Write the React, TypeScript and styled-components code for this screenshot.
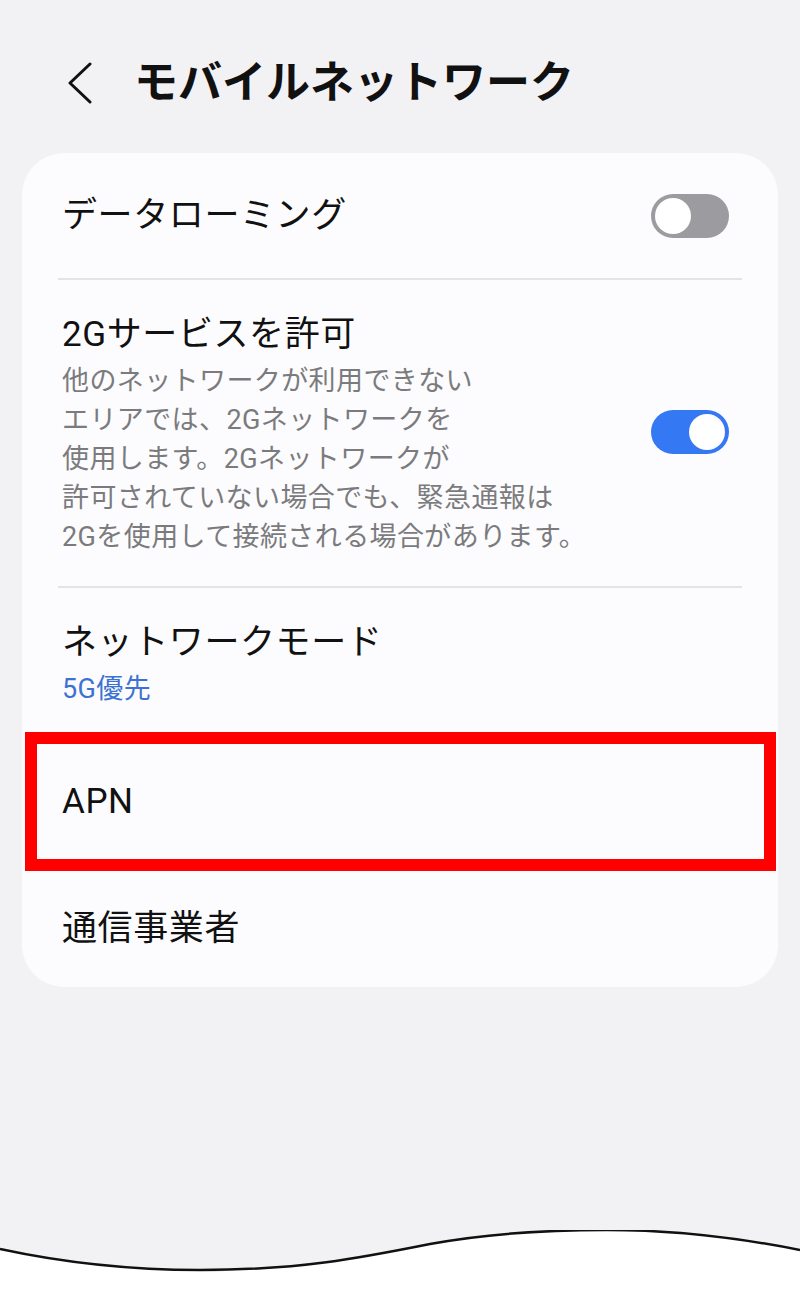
import React from "react";
import styled, { createGlobalStyle } from "styled-components";

const GlobalStyle = createGlobalStyle`
  html, body {
    margin: 0;
    padding: 0;
    background: #f2f2f4;
  }
  body {
    font-family: "Roboto", "Noto Sans CJK JP", sans-serif;
    color: #111;
  }
`;

const Page = styled.div`
  min-height: 1300px;
  display: flex;
  flex-direction: column;
  background: #f2f2f4;
`;

const Header = styled.header`
  display: flex;
  align-items: center;
  height: 86px;
  padding: 40px 0 27px 64px;
  gap: 38px;
`;

const BackButton = styled.button`
  display: flex;
  align-items: center;
  justify-content: center;
  width: 32px;
  height: 44px;
  padding: 0;
  border: none;
  background: none;
  cursor: pointer;
`;

const Title = styled.h1`
  margin: 0;
  font-size: 44px;
  font-weight: 700;
  line-height: 52px;
  letter-spacing: 0;
`;

const Card = styled.section`
  margin: 0 22px;
  background: #fcfcfe;
  border-radius: 42px;
  overflow: hidden;
`;

const Row = styled.div<{ $height?: number; $highlight?: boolean }>`
  display: flex;
  align-items: center;
  justify-content: space-between;
  box-sizing: border-box;
  ${(p) => (p.$height ? `min-height: ${p.$height}px;` : "")}
  padding: ${(p) => (p.$highlight ? "0 37px 0 25px" : "0 49px 0 40px")};
  ${(p) =>
    p.$highlight
      ? `border: 12px solid #ff0000; margin: 0 2px 0 3px;`
      : ""}
`;

const PaddedRow = styled(Row)<{ $top: number; $bottom: number }>`
  padding-top: ${(p) => p.$top}px;
  padding-bottom: ${(p) => p.$bottom}px;
`;

const TextBlock = styled.div`
  display: flex;
  flex-direction: column;
`;

const Label = styled.div`
  font-size: 35px;
  line-height: 46px;
  letter-spacing: 0.6px;
  color: #111;
`;

const Description = styled.div`
  margin-top: 4px;
  font-size: 27px;
  line-height: 39px;
  letter-spacing: 0.4px;
  color: #7b7b7d;
`;

const Value = styled.div`
  margin-top: 3px;
  font-size: 27px;
  line-height: 40px;
  letter-spacing: 0.4px;
  color: #3c73d2;
`;

const Divider = styled.div`
  height: 2px;
  margin: 0 36px;
  background: #e4e4e6;
`;

const Track = styled.div<{ $on?: boolean }>`
  position: relative;
  flex-shrink: 0;
  width: 78px;
  height: 44px;
  border-radius: 22px;
  background: ${(p) => (p.$on ? "#3478f4" : "#9c9ca0")};
  ${(p) => (p.$on ? "margin-bottom: 6px;" : "")}
`;

const Thumb = styled.div<{ $on?: boolean }>`
  position: absolute;
  top: 4px;
  left: ${(p) => (p.$on ? "38px" : "4px")};
  width: 36px;
  height: 36px;
  border-radius: 50%;
  background: #ffffff;
`;

const Wave = styled.svg`
  display: block;
  margin-top: auto;
  width: 800px;
  height: 70px;
`;

const Toggle = ({ on }: { on?: boolean }) => (
  <Track $on={on}>
    <Thumb $on={on} />
  </Track>
);

export default function App() {
  return (
    <Page>
      <GlobalStyle />
      <Header>
        <BackButton aria-label="戻る">
          <svg width="30" height="42" viewBox="0 0 30 42">
            <polyline
              points="25,2 5,21 25,40"
              fill="none"
              stroke="#111"
              strokeWidth="3"
              strokeLinecap="round"
              strokeLinejoin="round"
            />
          </svg>
        </BackButton>
        <Title>モバイルネットワーク</Title>
      </Header>

      <Card>
        <Row $height={125}>
          <Label>データローミング</Label>
          <Toggle />
        </Row>
        <Divider />
        <PaddedRow $top={32} $bottom={29}>
          <TextBlock>
            <Label>2Gサービスを許可</Label>
            <Description>
              他のネットワークが利用できない
              <br />
              エリアでは、2Gネットワークを
              <br />
              使用します。2Gネットワークが
              <br />
              許可されていない場合でも、緊急通報は
              <br />
              2Gを使用して接続される場合があります。
            </Description>
          </TextBlock>
          <Toggle on />
        </PaddedRow>
        <Divider />
        <PaddedRow $top={32} $bottom={23}>
          <TextBlock>
            <Label>ネットワークモード</Label>
            <Value>5G優先</Value>
          </TextBlock>
        </PaddedRow>
        <Row $height={139} $highlight>
          <Label>APN</Label>
        </Row>
        <Row $height={116}>
          <Label>通信事業者</Label>
        </Row>
      </Card>

      <Wave viewBox="0 0 800 70" preserveAspectRatio="none">
        <path
          d="M0 19 C60 32 130 40 200 40 C300 40 360 28 430 14 C490 3 550 0 607 0 C680 0 740 8 800 20 L800 70 L0 70 Z"
          fill="#ffffff"
        />
        <path
          d="M0 19 C60 32 130 40 200 40 C300 40 360 28 430 14 C490 3 550 0 607 0 C680 0 740 8 800 20"
          fill="none"
          stroke="#111"
          strokeWidth="2.5"
        />
      </Wave>
    </Page>
  );
}
